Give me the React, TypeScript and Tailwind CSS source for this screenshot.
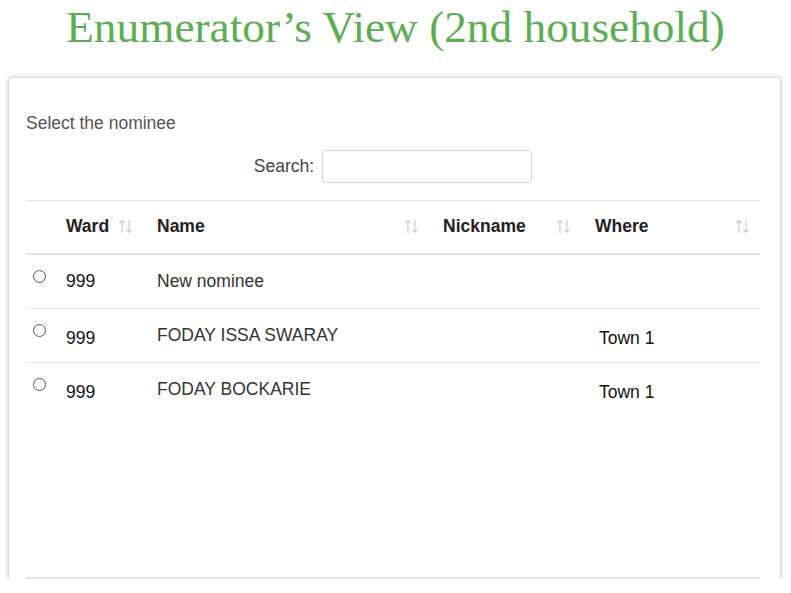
const sans = { fontFamily: '"Liberation Sans", Arial, sans-serif' };

type Nominee = { ward: string; name: string; nickname: string; where: string };

const rows: Nominee[] = [
  { ward: "999", name: "New nominee", nickname: "", where: "" },
  { ward: "999", name: "FODAY ISSA SWARAY", nickname: "", where: "Town 1" },
  { ward: "999", name: "FODAY BOCKARIE", nickname: "", where: "Town 1" },
];

const cols = "grid grid-cols-[32px_87px_286px_152px_177px]";

function SortIcon() {
  return (
    <svg width="15" height="15" viewBox="0 0 15 15" fill="none" stroke="#c8c8c8" strokeWidth="1.1">
      <path d="M4 14V1.5M1.2 4.3L4 1.5l2.8 2.8" />
      <path d="M11 1v12.5M8.2 10.7L11 13.5l2.8-2.8" />
    </svg>
  );
}

function Th({ label, pad }: { label: string; pad: string }) {
  return (
    <div className={`flex items-center justify-between ${pad}`}>
      <span className="font-bold text-[#222]">{label}</span>
      <SortIcon />
    </div>
  );
}

export default function App() {
  return (
    <div className="h-[593px] w-[791px] overflow-hidden bg-white" style={sans}>
      <h1
        className="pt-[1px] text-center text-[45.3px] leading-[52px] text-[#5cae53]"
        style={{ fontFamily: '"Liberation Serif", "Times New Roman", serif' }}
      >
        Enumerator’s View (2nd household)
      </h1>

      <div className="mt-[20px] h-[506px] overflow-hidden pl-[8px] pr-[10px] pt-[4px]">
        <div className="h-[520px] rounded-[3px] border border-[#dcdcdc] bg-white pl-[17px] pr-[20px] shadow-[0_0_5px_rgba(0,0,0,0.18)]">
          <p className="pt-[33px] text-[17.5px] leading-[24px] text-[#555]">Select the nominee</p>

          <div className="mt-[15px] flex items-center justify-center gap-2">
            <label className="text-[17.5px] text-[#444]">Search:</label>
            <input className="h-[33px] w-[210px] rounded-[3px] border border-[#d4d4d4] bg-white px-2 outline-none" />
          </div>

          <div className="mt-[17px] w-[734px] text-[17.5px]">
            <div className={`${cols} h-[55px] items-center border-t border-b-2 border-[#e2e2e2] pb-[2px]`}>
              <div />
              <Th label="Ward" pad="pl-2 pr-3" />
              <Th label="Name" pad="pl-3 pr-3" />
              <Th label="Nickname" pad="pl-3 pr-3" />
              <Th label="Where" pad="pl-3 pr-[10px]" />
            </div>

            {rows.map((r, i) => (
              <div
                key={i}
                className={`${cols} h-[54px] ${i < rows.length - 1 ? "border-b border-[#e6e6e6]" : ""}`}
              >
                <div className="flex pl-[7px] pt-[15px]">
                  <span className="h-[13px] w-[13px] rounded-full border border-[#555] bg-white" />
                </div>
                <div className={`pl-2 text-[#111] ${i === 0 ? "pt-[13px]" : "pt-[16px]"}`}>{r.ward}</div>
                <div className="pl-3 pt-[13px] text-[#333]">{r.name}</div>
                <div className="pl-3 pt-[13px] text-[#333]">{r.nickname}</div>
                <div className="pl-4 pt-[16px] text-[#111]">{r.where}</div>
              </div>
            ))}

            <div className="mt-[160px] h-[2px] bg-[#e4e4e4]" />
          </div>
        </div>
      </div>
    </div>
  );
}
